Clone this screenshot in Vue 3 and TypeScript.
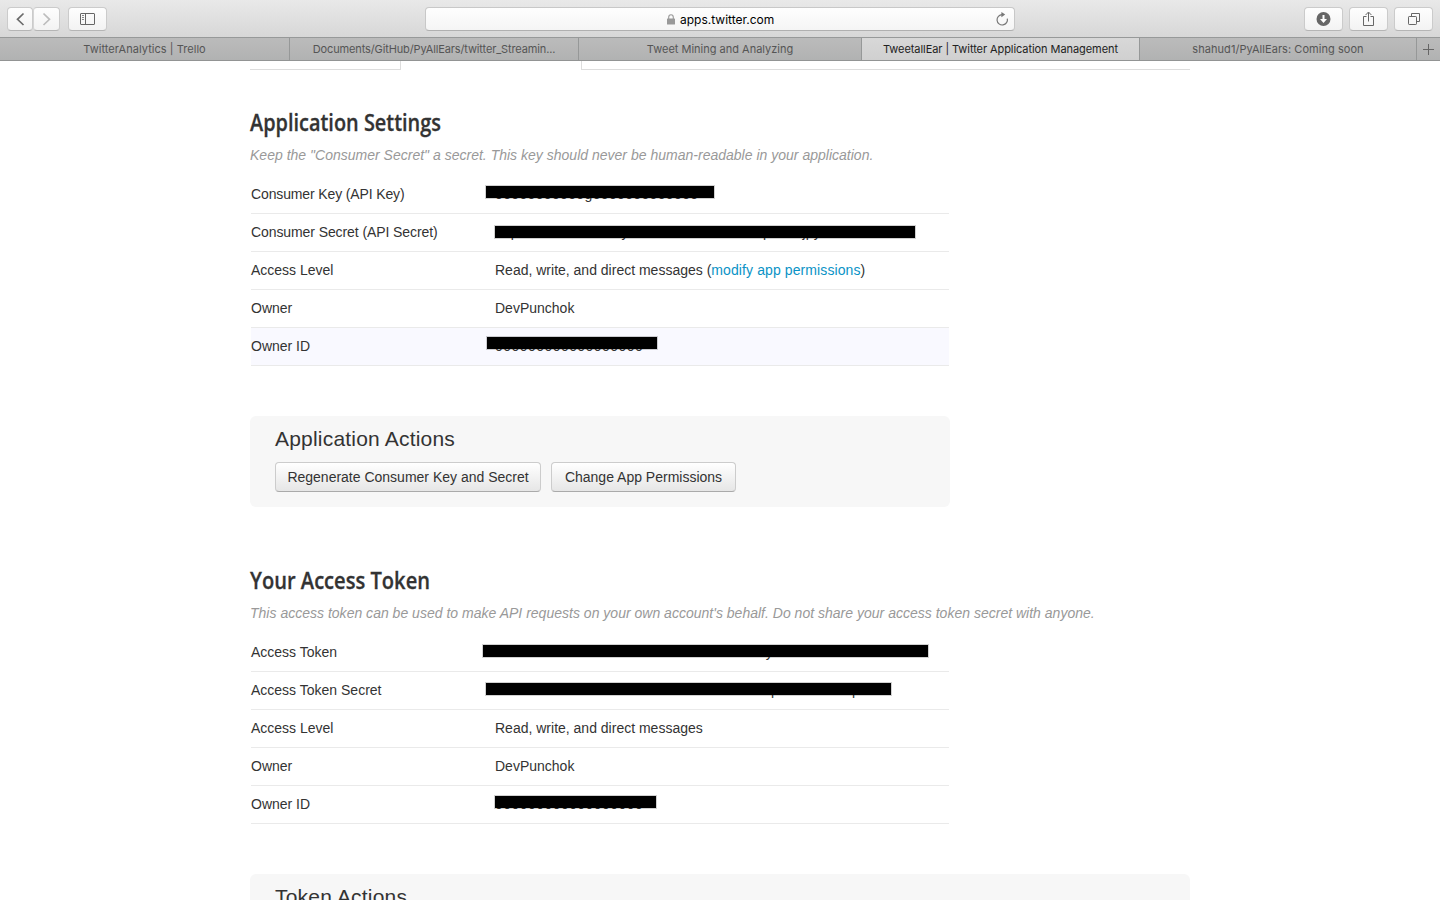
<script setup lang="ts">
interface Row {
  label: string
  ls?: number
  value?: string
  link?: string
  // redaction: bar offset from the value column, top inside the row, width
  bar?: { x: number; y: number; w: number }
  hidden?: string
  hiddenLs?: number
  highlighted?: boolean
}

const tabs = [
  { title: 'TwitterAnalytics | Trello', width: 290, ls: 0.05 },
  { title: 'Documents/GitHub/PyAllEars/twitter_Streamin...', width: 289, ls: -0.13 },
  { title: 'Tweet Mining and Analyzing', width: 283, ls: 0 },
  { title: 'TweetallEar | Twitter Application Management', width: 278, ls: -0.07, active: true },
  { title: 'shahud1/PyAllEars: Coming soon', width: 277, ls: 0.05 },
]

const o = (n: number) => 'o'.repeat(n)

const settings: Row[] = [
  { label: 'Consumer Key (API Key)', ls: -0.13, bar: { x: -9, y: 10, w: 228 }, hidden: o(11) + 'g' + o(13), hiddenLs: 0.35 },
  { label: 'Consumer Secret (API Secret)', ls: -0.09, bar: { x: -0.5, y: 11.5, w: 420 }, hidden: 'oop' + o(13) + 'y' + o(17) + 'p' + o(4) + 'jpy' + o(8), hiddenLs: 0.12 },
  { label: 'Access Level', value: 'Read, write, and direct messages (', link: 'modify app permissions' },
  { label: 'Owner', value: 'DevPunchok' },
  { label: 'Owner ID', bar: { x: -8, y: 9, w: 170 }, hidden: '0'.repeat(18), hiddenLs: 0.45, highlighted: true },
]

const token: Row[] = [
  { label: 'Access Token', bar: { x: -12, y: 11, w: 445 }, hidden: o(34) + 'y' + o(14), hiddenLs: 0.18 },
  { label: 'Access Token Secret', bar: { x: -9, y: 11, w: 405 }, hidden: o(34) + 'p' + o(9) + 'p', hiddenLs: 0.33 },
  { label: 'Access Level', value: 'Read, write, and direct messages' },
  { label: 'Owner', value: 'DevPunchok' },
  { label: 'Owner ID', bar: { x: -0.5, y: 9.5, w: 161 }, hidden: '0'.repeat(18), hiddenLs: 0.45 },
]

const sections = [
  {
    title: 'Application Settings', titleWidth: 191,
    note: 'Keep the "Consumer Secret" a secret. This key should never be human-readable in your application.',
    rows: settings,
    panel: 'Application Actions',
    buttons: [
      { text: 'Regenerate Consumer Key and Secret', width: 266 },
      { text: 'Change App Permissions', width: 185 },
    ],
  },
  {
    title: 'Your Access Token', titleWidth: 180,
    note: "This access token can be used to make API requests on your own account's behalf. Do not share your access token secret with anyone.",
    rows: token,
    panel: 'Token Actions',
    buttons: [],
  },
]
</script>

<template>
  <div class="window">
    <header class="toolbar">
      <div class="side">
        <div class="pair">
          <button class="tool half left"><svg width="24" height="22"><path d="M15.5 5.5 L9.5 11.3 L15.5 17" fill="none" stroke="#6b6b6b" stroke-width="1.7" /></svg></button>
          <button class="tool half right"><svg width="24" height="22"><path d="M9.5 5.5 L15.5 11.3 L9.5 17" fill="none" stroke="#bdbdbd" stroke-width="1.7" /></svg></button>
        </div>
        <button class="tool">
          <svg width="37" height="22"><g fill="none" stroke="#666"><rect x="11.5" y="5.5" width="14" height="11" rx=".5" /><path d="M16.5 5.5V16.5" /><path d="M13 7.5H15M13 9.5H15M13 11.5H15" stroke="#888" /></g></svg>
        </button>
      </div>
      <div class="address">
        <svg class="lock" width="8" height="11"><rect y="4.5" width="8" height="6" rx=".6" fill="#999" /><path d="M1.7 5V3.2a2.3 2.5 0 0 1 4.6 0V5" fill="none" stroke="#999" stroke-width="1.1" /></svg>
        <span class="domain">apps.twitter.com</span>
        <svg class="reload" width="14" height="14"><path d="M7.2 2.6A5.2 5.2 0 1 0 12.3 6.6" fill="none" stroke="#777" stroke-width="1.2" /><path d="M6.4 0L10.2 2.6L6.4 5.2Z" fill="#777" /></svg>
      </div>
      <div class="side end">
        <button class="tool"><svg width="37" height="22"><circle cx="18.5" cy="11" r="7" fill="#666" /><path d="M18.5 7V12" stroke="#fff" stroke-width="2" /><path d="M15 11H22L18.5 15Z" fill="#fff" /></svg></button>
        <button class="tool"><svg width="37" height="22"><path d="M16.5 8.5H13.5V17.5H23.5V8.5H20.5M18.5 13.5V4.5M15.6 7L18.5 4L21.4 7" fill="none" stroke="#666" /></svg></button>
        <button class="tool"><svg width="37" height="22"><path d="M16.5 8V5.5H24.5V13.5H22" fill="none" stroke="#666" /><rect x="13.5" y="8.5" width="8" height="8" rx=".7" fill="none" stroke="#666" /></svg></button>
      </div>
    </header>
    <nav class="tabs">
      <div v-for="t in tabs" :key="t.title" class="tab" :class="{ active: t.active }" :style="{ width: t.width + 'px', letterSpacing: t.ls + 'px' }">{{ t.title }}</div>
      <div class="add"><svg width="11" height="11"><path d="M5.5 0V11M0 5.5H11" stroke="#666" /></svg></div>
    </nav>
    <main class="page">
      <div class="pagetabs"><div class="first"></div><div class="current"></div><div class="rest"></div></div>
      <section v-for="(s, i) in sections" :key="s.title" class="section">
        <h2><svg width="240" height="32"><text x="0" y="23" :textLength="s.titleWidth" lengthAdjust="spacingAndGlyphs">{{ s.title }}</text></svg></h2>
        <p class="note">{{ s.note }}</p>
        <div class="table">
          <div v-for="r in s.rows" :key="r.label" class="row" :class="{ highlighted: r.highlighted }">
            <div class="label" :style="{ letterSpacing: (r.ls ?? 0) + 'px' }">{{ r.label }}</div>
            <div class="value">
              <template v-if="r.value">{{ r.value }}<a v-if="r.link">{{ r.link }}</a><template v-if="r.link">)</template></template>
              <template v-else>
                <span :style="{ letterSpacing: (r.hiddenLs ?? 0) + 'px' }">{{ r.hidden }}</span>
                <span v-if="r.bar" class="bar" :style="{ left: r.bar.x + 'px', top: r.bar.y + 'px', width: r.bar.w + 'px' }"></span>
              </template>
            </div>
          </div>
        </div>
        <div class="panel" :class="{ wide: i === 1 }">
          <h3>{{ s.panel }}</h3>
          <div class="actions"><button v-for="b in s.buttons" :key="b.text" class="btn" :style="{ width: b.width + 'px' }">{{ b.text }}</button></div>
        </div>
      </section>
    </main>
  </div>
</template>

<style>
html, body { background: #fff; overflow: hidden; }
</style>

<style scoped>
* { box-sizing: border-box; }
.window { width: 1440px; height: 900px; overflow: hidden; background: #fff; font-family: "Liberation Sans", Arial, sans-serif; color: #333; }
.toolbar { height: 37px; display: flex; align-items: flex-start; padding: 7px 7px 0; background: linear-gradient(#e9e9e9, #d7d7d7); }
.side { width: 418px; display: flex; gap: 8px; }
.end { width: auto; margin-left: auto; gap: 6px; }
.pair { display: flex; }
.tool { width: 39px; height: 24px; border: 1px solid #cbcbcb; border-bottom-color: #b5b5b5; border-radius: 4px; padding: 0; background: linear-gradient(#fefefe, #f3f3f3); }
.tool svg { display: block; }
.half { width: 27px; }
.half.left { width: 26px; }
.half.right { border-left-color: #d5d5d5; }
.address { width: 590px; height: 24px; display: flex; align-items: center; border: 1px solid #c8c8c8; border-bottom-color: #b0b0b0; border-radius: 4px; background: linear-gradient(#fefefe, #f5f5f5); padding: 0 5px 0 241px; }
.domain { font: 12px/22px Inter, sans-serif; color: #000; margin-left: 5px; padding-top: 1px; }
.reload { margin-left: auto; }
.tabs { height: 24px; display: flex; border-top: 1px solid #979999; border-bottom: 1px solid #929494; background: linear-gradient(#bbb, #b1b2b2); }
.tab { border-right: 1px solid #969898; font: 11px/23px Inter, sans-serif; color: #555; text-align: center; white-space: nowrap; }
.tab.active { background: linear-gradient(#d8d8d8, #d0d0d0); color: #222; }
.add { flex: 1; display: flex; align-items: center; justify-content: center; padding-top: 1px; }
.page { width: 940px; margin: 0 auto; }
.pagetabs { display: flex; height: 9px; }
.first { width: 151px; border: solid #ddd; border-width: 0 1px 1px 0; }
.current { width: 180px; }
.rest { flex: 1; border: solid #ddd; border-width: 0 0 1px 1px; }
.section { padding-top: 36px; }
.section + .section { padding-top: 57px; }
h2 { margin: 0; height: 37px; padding-top: 2px; }
h2 svg { display: block; overflow: visible; }
h2 text { font: 600 23px "Open Sans", sans-serif; fill: #333; stroke: #333; stroke-width: .3px; }
.note { margin: 0; height: 33px; line-height: 24px; font-size: 14px; font-style: italic; color: #999; white-space: nowrap; letter-spacing: .01px; }
.table { width: 700px; padding: 0 1px; font-size: 14px; }
.row { height: 38px; display: flex; line-height: 37px; border-bottom: 1px solid #eaeaea; }
.highlighted { background: #f9f9ff; }
.label { width: 244px; }
.value { position: relative; flex: 1; white-space: nowrap; }
.value a { color: #0a93c6; letter-spacing: .1px; }
.bar { position: absolute; height: 12px; background: #000; outline: 1px solid rgba(0, 0, 0, .18); }
.panel { width: 700px; height: 91px; margin-top: 50px; border-radius: 6px; background: #f7f7f7; padding: 8px 25px; }
.panel.wide { width: 940px; }
h3 { margin: 0; height: 38px; font-size: 21px; line-height: 30px; font-weight: 400; letter-spacing: .2px; }
.actions { display: flex; gap: 10px; }
.btn { height: 30px; padding: 0; border: 1px solid #ccc; border-bottom-color: #aaa; border-radius: 4px; background: linear-gradient(#fff, #e6e6e6); font: 14px/28px "Liberation Sans", Arial, sans-serif; color: #333; white-space: nowrap; }
</style>
